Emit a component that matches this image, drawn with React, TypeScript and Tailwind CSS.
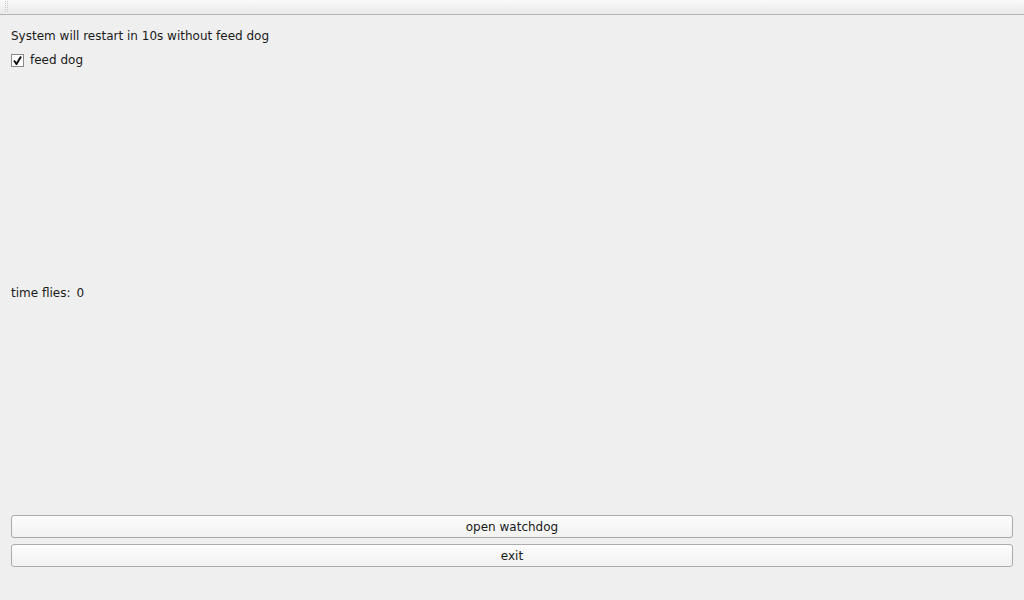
import React from "react";

export default function App() {
  return (
    <div
      className="w-[1024px] h-[600px] bg-[#efefef] flex flex-col text-[12px] text-[#1a1a1a] overflow-hidden"
      style={{ fontFamily: '"DejaVu Sans", sans-serif' }}
    >
      <div className="h-[15px] shrink-0 bg-gradient-to-b from-[#fafafa] to-[#eaeaea] border-b border-[#b4b4b4] flex">
        <div className="ml-[5px] w-[3px] flex flex-col gap-[1px] pt-[1px]">
          {Array.from({ length: 6 }).map((_, i) => (
            <div key={i} className="flex gap-[1px]">
              <div className="w-[1px] h-[1px] bg-[#c8c8c8]" />
              <div className="w-[1px] h-[1px] bg-[#c8c8c8]" />
            </div>
          ))}
        </div>
      </div>
      <div className="flex-1 flex flex-col px-[11px]">
        <div className="mt-[13px] h-[16px] leading-[16px]">System will restart in 10s without feed dog</div>
        <div className="mt-[8px] flex items-center h-[16px]">
          <div className="w-[13px] h-[13px] border border-[#8a8a8a] bg-white flex items-center justify-center">
            <svg width="9" height="9" viewBox="0 0 9 9">
              <path d="M1 4.5 L3.5 8 L8 0.5" fill="none" stroke="#111" strokeWidth="2" />
            </svg>
          </div>
          <span className="ml-[6px] leading-[16px]">feed dog</span>
        </div>
        <div className="mt-[217px] h-[16px] leading-[16px] flex">
          <span>time flies:</span>
          <span className="ml-[6px]">0</span>
        </div>
        <div className="flex-1" />
        <button className="h-[23px] w-full rounded-[3px] border border-[#ababab] bg-gradient-to-b from-[#fcfcfc] to-[#f2f2f2] text-[12px] leading-[20px]">
          open watchdog
        </button>
        <button className="mt-[6px] h-[23px] w-full rounded-[3px] border border-[#ababab] bg-gradient-to-b from-[#fcfcfc] to-[#f2f2f2] text-[12px] leading-[20px]">
          exit
        </button>
        <div className="h-[33px]" />
      </div>
    </div>
  );
}
